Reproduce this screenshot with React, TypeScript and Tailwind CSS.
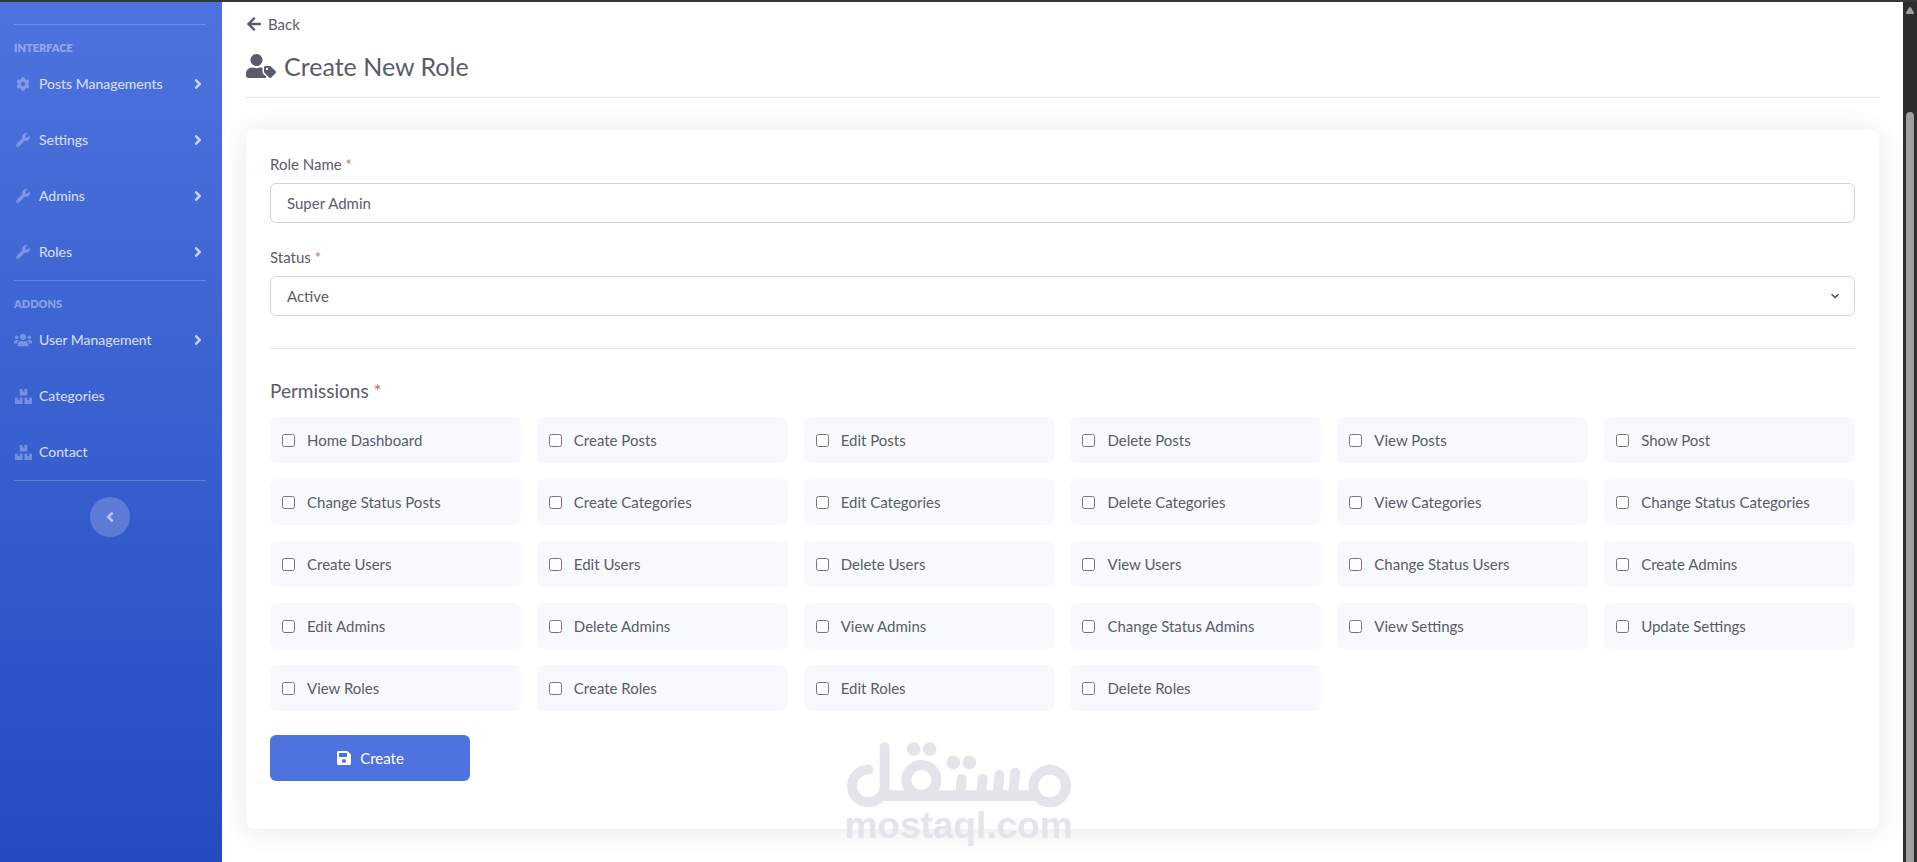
import { useState } from 'react';
import type { IconType } from 'react-icons';
import { FaAngleLeft, FaAngleRight, FaArrowLeft, FaBoxes, FaCog, FaSave, FaUserTag, FaUsers, FaWrench } from 'react-icons/fa';

interface NavItem {
  label: string;
  icon: IconType;
  iconSize: number;
  expandable?: boolean;
}

const INTERFACE_ITEMS: NavItem[] = [
  { label: 'Posts Managements', icon: FaCog, iconSize: 14, expandable: true },
  { label: 'Settings', icon: FaWrench, iconSize: 14, expandable: true },
  { label: 'Admins', icon: FaWrench, iconSize: 14, expandable: true },
  { label: 'Roles', icon: FaWrench, iconSize: 14, expandable: true },
];

const ADDON_ITEMS: NavItem[] = [
  { label: 'User Management', icon: FaUsers, iconSize: 18, expandable: true },
  { label: 'Categories', icon: FaBoxes, iconSize: 17 },
  { label: 'Contact', icon: FaBoxes, iconSize: 17 },
];

const PERMISSIONS = [
  'Home Dashboard',
  'Create Posts',
  'Edit Posts',
  'Delete Posts',
  'View Posts',
  'Show Post',
  'Change Status Posts',
  'Create Categories',
  'Edit Categories',
  'Delete Categories',
  'View Categories',
  'Change Status Categories',
  'Create Users',
  'Edit Users',
  'Delete Users',
  'View Users',
  'Change Status Users',
  'Create Admins',
  'Edit Admins',
  'Delete Admins',
  'View Admins',
  'Change Status Admins',
  'View Settings',
  'Update Settings',
  'View Roles',
  'Create Roles',
  'Edit Roles',
  'Delete Roles',
];

function NavSection({ title, items }: { title: string; items: NavItem[] }) {
  return (
    <div className="border-t border-white/20">
      <h2 className="pt-[15px] text-[11px] leading-4 font-extrabold text-white/40 uppercase">{title}</h2>
      <ul>
        {items.map(({ label, icon: Icon, iconSize, expandable }) => (
          <li key={label}>
            <a href="#" className="flex h-14 items-center text-sm text-white/80 hover:text-white">
              <span className="mr-[7px] flex w-[18px] justify-center text-white/30">
                <Icon size={iconSize} />
              </span>
              {label}
              {expandable && <FaAngleRight size={16} className="ml-auto text-white/70" />}
            </a>
          </li>
        ))}
      </ul>
    </div>
  );
}

function Sidebar() {
  return (
    <nav className="w-[222px] shrink-0 bg-linear-to-b from-[#4e73df] to-[#244cc0] pt-[22px] pr-4 pl-[14px]">
      <NavSection title="Interface" items={INTERFACE_ITEMS} />
      <NavSection title="Addons" items={ADDON_ITEMS} />
      <div className="flex justify-center border-t border-white/20 pt-4">
        <button
          type="button"
          aria-label="Toggle sidebar"
          className="flex size-10 items-center justify-center rounded-full bg-white/20 text-white/60"
        >
          <FaAngleLeft size={16} />
        </button>
      </div>
    </nav>
  );
}

function Required() {
  return <span className="text-[#c0764a]">*</span>;
}

function Watermark() {
  return (
    <div className="pointer-events-none absolute inset-x-0 bottom-[18px] flex flex-col items-center text-[#e4e5ea]">
      <svg width="224" height="66" viewBox="78 66 672 198" fill="none" stroke="currentColor" strokeWidth="30" strokeLinecap="round" aria-hidden="true">
        <path d="M191 82V198A49 49 0 1 1 142 149" />
        <path d="M185 227H655" strokeWidth="32" strokeLinecap="butt" />
        <circle cx="301" cy="180" r="45" />
        <circle cx="686" cy="198" r="49" />
        <path d="M422 177L418 225M485 177L480 225M535 165L529 225M583 158L576 225" />
        <g fill="currentColor" stroke="none">
          <circle cx="278" cy="87" r="20.500" />
          <circle cx="326" cy="87" r="20.500" />
          <circle cx="397" cy="127" r="20.500" />
          <circle cx="445" cy="127" r="20.500" />
        </g>
      </svg>
      <span className="font-['Liberation_Sans',sans-serif] text-[37px] leading-9 font-bold">mostaql.com</span>
    </div>
  );
}

function ScrollTrack() {
  return (
    <div className="flex w-[14px] shrink-0 flex-col items-center bg-[#2c2c2c] pt-[5px]" aria-hidden="true">
      <svg width="8" height="7" viewBox="0 0 8 7" fill="#a0a0a0">
        <path d="M4 0Q4.700 0 5 .6L7.900 5.500Q8.200 7 7.200 7H.8Q-.2 7 .1 5.500L3 .6Q3.300 0 4 0Z" />
      </svg>
      <div className="mt-[98px] w-2 grow rounded-t-full bg-[#9f9f9f]" />
    </div>
  );
}

export default function App() {
  const [roleName, setRoleName] = useState('Super Admin');
  const [status, setStatus] = useState('active');
  const [selected, setSelected] = useState<string[]>([]);

  const toggle = (name: string) =>
    setSelected((prev) => (prev.includes(name) ? prev.filter((p) => p !== name) : [...prev, name]));

  return (
    <div className="relative flex min-h-screen border-t-2 border-[#35353b] bg-white font-['Lato',sans-serif] text-[#5a5c69]">
      <Sidebar />
      <main className="min-w-0 grow px-6 pt-3 pb-8">
        <a href="#" className="flex w-fit items-center gap-1.5 text-[15px] leading-5">
          <FaArrowLeft size={16} />
          Back
        </a>
        <h1 className="mt-4 flex items-center gap-2 border-b border-[#e3e4e8] pb-[15px] text-[25px] leading-8">
          <FaUserTag size={30} />
          Create New Role
        </h1>

        <form
          className="mt-8 rounded-lg bg-white p-6 pb-12 text-[15px] leading-[21px] shadow-[0_2px_28px_rgba(58,70,80,0.12)]"
          onSubmit={(e) => e.preventDefault()}
        >
          <label htmlFor="role-name" className="block">
            Role Name <Required />
          </label>
          <input
            id="role-name"
            type="text"
            value={roleName}
            onChange={(e) => setRoleName(e.target.value)}
            className="mt-2 h-10 w-full rounded-md border border-[#d1d3e2] px-4"
          />
          <label htmlFor="status" className="mt-6 block">
            Status <Required />
          </label>
          <div className="relative mt-2">
            <select
              id="status"
              value={status}
              onChange={(e) => setStatus(e.target.value)}
              className="block h-10 w-full appearance-none rounded-md border border-[#d1d3e2] bg-white px-4"
            >
              <option value="active">Active</option>
              <option value="inactive">Inactive</option>
            </select>
            <svg className="pointer-events-none absolute top-4 right-4" width="8" height="8" viewBox="0 0 8 8" fill="none" stroke="#4a4b57" strokeWidth="1.500">
              <path d="M.5 2.200L4 5.500L7.500 2.200" />
            </svg>
          </div>

          <hr className="my-8 border-[#e3e4e8]" />

          <fieldset>
            <legend className="text-[19px] leading-5">
              Permissions <Required />
            </legend>
            <div className="mt-4 grid grid-cols-6 gap-4">
              {PERMISSIONS.map((name) => (
                <label key={name} className="flex h-[46px] items-center gap-3 rounded-md bg-[#f8f9fc] px-3">
                  <input type="checkbox" checked={selected.includes(name)} onChange={() => toggle(name)} />
                  {name}
                </label>
              ))}
            </div>
          </fieldset>

          <button
            type="submit"
            className="mt-6 flex h-[46px] w-[200px] items-center justify-center gap-2 rounded-md bg-[#4e73df] text-white"
          >
            <FaSave size={16} />
            Create
          </button>
        </form>
      </main>
      <ScrollTrack />
      <Watermark />
    </div>
  );
}
